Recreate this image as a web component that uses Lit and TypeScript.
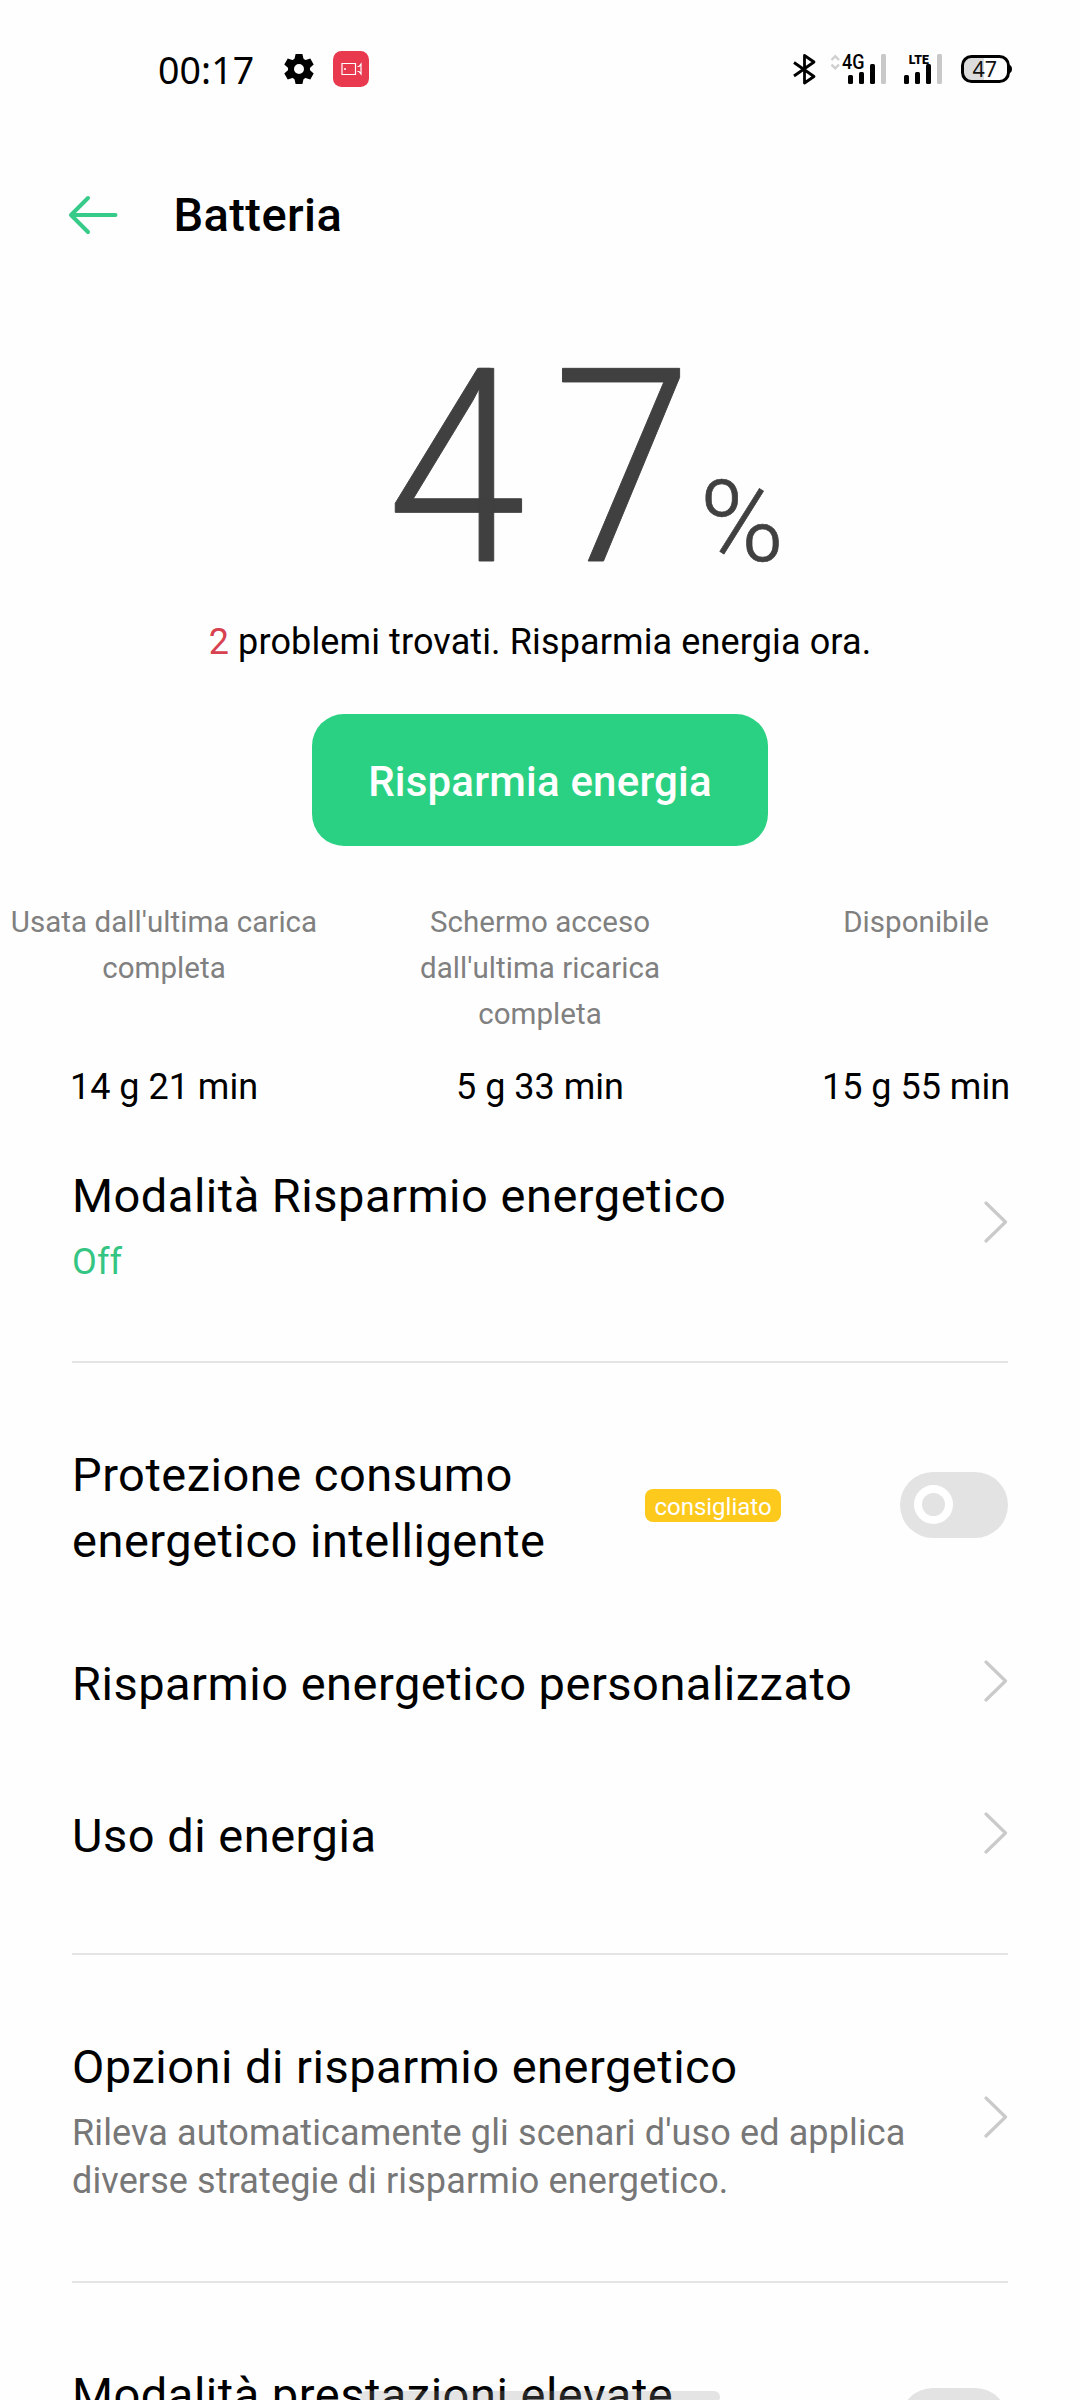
import { LitElement, html, css, svg, nothing } from "lit";
import { customElement, property } from "lit/decorators.js";

@customElement("signal-meter")
class SignalMeter extends LitElement {
  @property() network = "4G";

  static styles = css`
    :host { display: block; width: 58px; height: 34px; }
    svg { display: block; }
    .net { font-family: Roboto, sans-serif; font-weight: 500; fill: #000; }
    .lte { font-weight: 900; }
  `;

  render() {
    const lte = this.network === "LTE";
    return html`<svg width="58" height="34" viewBox="0 0 58 34">
      ${lte ? nothing : svg`<path d="M1.5 8 5.2 4.2 9 8M1.5 12.600 5.200 16.400 9 12.600" fill="none" stroke="#cfcfcf" stroke-width="2.4"/>`}
      ${lte
        ? svg`<text class="net lte" x="22.800" y="12" font-size="12.500" textLength="20" lengthAdjust="spacingAndGlyphs">LTE</text>`
        : svg`<text class="net" x="12" y="16.500" font-size="19.500" textLength="22.500" lengthAdjust="spacingAndGlyphs">4G</text>`}
      <rect x="18" y="23" width="5" height="9" rx="1.500" />
      <rect x="29" y="20" width="5" height="12" rx="1.500" />
      <rect x="40" y="12" width="5" height="20" rx="1.500" />
      <rect x="51" y="2" width="5" height="30" rx="1.500" fill="#c8c8c8" />
    </svg>`;
  }
}

@customElement("status-bar")
class StatusBar extends LitElement {
  static styles = css`
    :host { display: flex; height: 138px; box-sizing: border-box; padding: 52px 68px 0 158px; align-items: flex-start; }
    svg { display: block; flex: none; }
    .time { font: 400 37.500px/34px "Noto Sans", sans-serif; width: 125px; letter-spacing: 0.100px; margin-top: 1px; }
    .rec { margin: -1px 0 0 18px; }
    .right { margin-left: auto; display: flex; }
    .lte { margin-left: -2px; }
    .bat { margin-left: 15px; }
    .level { font-family: "Noto Sans", sans-serif; font-size: 21.500px; fill: #111; }
  `;

  render() {
    return html`
      <div class="time">00:17</div>
      <svg width="32" height="34" viewBox="0 0 32 34">
        <g transform="translate(16 17)">
          <circle r="8" fill="none" stroke="#000" stroke-width="6" />
          ${[0, 60, 120, 180, 240, 300].map(
            (a) => svg`<path transform=${`rotate(${a})`} d="M-5 -8 -3.400 -15H3.400L5 -8Z" />`,
          )}
        </g>
      </svg>
      <svg class="rec" width="36" height="36" viewBox="0 0 36 36">
        <rect width="36" height="36" rx="8.500" fill="#e8394e" />
        <path d="M9 12.500h13.500v11H9zM24.500 15.500h1.500l2-2.500v10l-2-2.500h-1.500" fill="none" stroke="#fff" stroke-width="1.200" />
        <circle cx="12" cy="18" r="1" fill="#fff" />
      </svg>
      <div class="right">
        <svg width="38" height="34" viewBox="0 0 38 34">
          <path d="M2 10.500 22 24.500 12.500 31V3.500L22 10 2 24" fill="none" stroke="#000" stroke-width="2.800" stroke-linejoin="round" />
        </svg>
        <signal-meter network="4G"></signal-meter>
        <signal-meter class="lte" network="LTE"></signal-meter>
        <svg class="bat" width="53" height="34" viewBox="0 0 53 34">
          <path d="M12 4.500h13v25H12a8 8 0 0 1-8-8v-9a8 8 0 0 1 8-8z" fill="#dcdcdc" />
          <rect x="3.500" y="4.500" width="46" height="25" rx="9" fill="none" stroke="#000" stroke-width="3" />
          <path d="M50 12.500q3 1 3 4.500t-3 4.500z" />
          <text class="level" x="13.500" y="24.500">47</text>
        </svg>
      </div>
    `;
  }
}

@customElement("toggle-switch")
class ToggleSwitch extends LitElement {
  static styles = css`
    :host { display: block; box-sizing: border-box; width: 108px; height: 66px; border-radius: 33px; background: #e3e3e3; padding: 13.500px; flex: none; }
    .knob { box-sizing: border-box; width: 39px; height: 39px; border: 8px solid #fff; border-radius: 50%; }
  `;
  render() {
    return html`<div class="knob"></div>`;
  }
}

@customElement("setting-row")
class SettingRow extends LitElement {
  @property() heading = "";
  @property() detail = "";
  @property() badge = "";
  @property() control = "arrow";
  @property({ type: Boolean }) accent = false;

  static styles = css`
    :host { display: flex; align-items: center; justify-content: space-between; }
    :host([tall]) { height: 127px; }
    :host([tall]) .text { align-self: flex-start; }
    .text { flex: 1; }
    .heading { font-size: 47px; line-height: 66px; letter-spacing: 0.500px; white-space: pre-line; }
    .detail { font-size: 36px; line-height: 48.500px; letter-spacing: 0.120px; margin-top: 9px; color: #777; white-space: pre-line; }
    .accent { color: #35c583; }
    .badge { width: 136px; height: 33px; border-radius: 8px; background: #fdc91c; color: #fff; font-size: 24px; line-height: 36px; text-align: center; margin: 0 119px 5px 0; }
    svg { display: block; margin-bottom: 5px; }
    toggle-switch { margin-bottom: 6px; }
    :host([tall]) toggle-switch { margin-bottom: 8px; }
  `;

  render() {
    return html`
      <div class="text">
        <div class="heading">${this.heading}</div>
        ${this.detail ? html`<div class="detail ${this.accent ? "accent" : ""}">${this.detail}</div>` : nothing}
      </div>
      ${this.badge ? html`<div class="badge">${this.badge}</div>` : nothing}
      ${this.control === "switch"
        ? html`<toggle-switch></toggle-switch>`
        : html`<svg width="24" height="42" viewBox="0 0 24 42">
            <path d="M2 2 21.500 21 2 40" fill="none" stroke="#cacaca" stroke-width="3.200" stroke-linecap="round" stroke-linejoin="round" />
          </svg>`}
    `;
  }
}

const USAGE = [
  { label: "Usata dall'ultima carica\ncompleta", value: "14 g 21 min" },
  { label: "Schermo acceso\ndall'ultima ricarica\ncompleta", value: "5 g 33 min" },
  { label: "Disponibile", value: "15 g 55 min" },
];

@customElement("app-root")
class AppRoot extends LitElement {
  static styles = css`
    :host { display: block; position: relative; width: 1080px; height: 2400px; overflow: hidden; background: #fefefe; color: #000; font-family: Roboto, sans-serif; }
    .bar { display: flex; align-items: center; height: 154px; box-sizing: border-box; padding: 0 0 0 67px; }
    .title { font-size: 47px; font-weight: 500; letter-spacing: 0.400px; line-height: 66px; margin: 0 0 0 54.500px; }
    .hero { display: flex; align-items: baseline; height: 318px; box-sizing: border-box; padding: 17.500px 0 0 387px; color: #404040; font-weight: 300; line-height: 318px; }
    .digit { font-size: 271px; transform: scaleX(0.925); transform-origin: 0 0; -webkit-text-stroke: 1px #404040; }
    .digit + .digit { margin-left: 15.600px; }
    .pct { font-size: 114px; margin-left: -3.600px; -webkit-text-stroke: 0.700px #404040; }
    .issues { font-size: 36px; letter-spacing: 0.120px; line-height: 48px; height: 104px; text-align: center; padding-top: 8px; box-sizing: border-box; }
    .count { color: #d8414f; }
    .save { display: flex; align-items: center; justify-content: center; width: 456px; height: 132px; margin: 0 auto; border-radius: 32px; background: #2bd182; color: #fff; font-size: 42px; letter-spacing: 0.200px; font-weight: 500; padding-top: 3px; box-sizing: border-box; }
    .usage { display: grid; grid-template-columns: 328px 424px 328px; height: 317px; box-sizing: border-box; padding-top: 53px; text-align: center; }
    .label { font-size: 29.500px; letter-spacing: 0.050px; line-height: 46px; height: 164px; color: #808080; white-space: pre-line; }
    .value { font-size: 36px; line-height: 48px; }
    .list { padding: 0 72px; display: flex; flex-direction: column; }
    .line { height: 2px; background: #e4e4e4; }
    .l1 { margin: 74.500px 0 78.500px; }
    .l2 { margin: 84px 0 79px; }
    .l3 { margin: 75px 0 79px; }
    .r3 { margin-top: 77px; }
    .r4 { margin-top: 86px; }
    .handle { position: absolute; left: 360px; top: 2391px; width: 360px; height: 12px; border-radius: 6px; background: rgba(150, 150, 150, 0.250); }
  `;

  render() {
    return html`
      <status-bar></status-bar>
      <div class="bar">
        <svg width="52" height="40" viewBox="0 0 52 40">
          <path d="M21 3 4 20 21 37M4 20H48.500" fill="none" stroke="#37cb8a" stroke-width="4" stroke-linecap="round" stroke-linejoin="round" />
        </svg>
        <div class="title">Batteria</div>
      </div>
      <div class="hero"><span class="digit">4</span><span class="digit">7</span><span class="pct">%</span></div>
      <div class="issues"><span class="count">2</span> problemi trovati. Risparmia energia ora.</div>
      <div class="save">Risparmia energia</div>
      <div class="usage">
        ${USAGE.map((u) => html`<div><div class="label">${u.label}</div><div class="value">${u.value}</div></div>`)}
      </div>
      <div class="list">
        <setting-row heading="Modalità Risparmio energetico" detail="Off" accent></setting-row>
        <div class="line l1"></div>
        <setting-row heading=${"Protezione consumo\nenergetico intelligente"} badge="consigliato" control="switch"></setting-row>
        <setting-row class="r3" heading="Risparmio energetico personalizzato"></setting-row>
        <setting-row class="r4" heading="Uso di energia"></setting-row>
        <div class="line l2"></div>
        <setting-row heading="Opzioni di risparmio energetico" detail=${"Rileva automaticamente gli scenari d'uso ed applica\ndiverse strategie di risparmio energetico."}></setting-row>
        <div class="line l3"></div>
        <setting-row tall heading="Modalità prestazioni elevate" control="switch"></setting-row>
      </div>
      <div class="handle"></div>
    `;
  }
}
